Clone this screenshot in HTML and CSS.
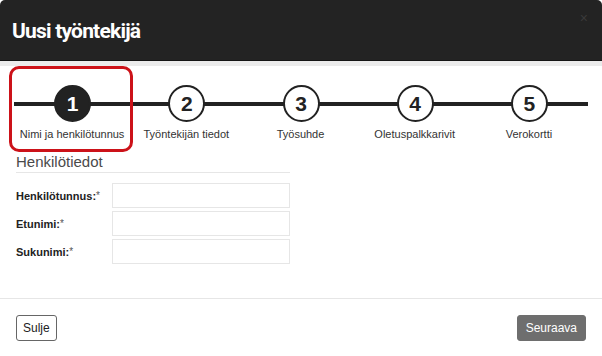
FILE: index.html
```html
<!DOCTYPE html>
<html lang="fi">
<head>
<meta charset="utf-8">
<link rel="stylesheet" href="styles.css">
</head>
<body>
<div class="dialog">
  <div class="header">
    <h1 class="title">Uusi työntekijä</h1>
    <span class="close">×</span>
  </div>
  <div class="band"></div>
  <div class="body">
    <div class="stepper">
      <div class="highlight"></div>
      <div class="step active"><div class="circle">1</div><div class="label">Nimi ja henkilötunnus</div></div>
      <div class="step"><div class="circle">2</div><div class="label">Työntekijän tiedot</div></div>
      <div class="step"><div class="circle">3</div><div class="label">Työsuhde</div></div>
      <div class="step"><div class="circle">4</div><div class="label">Oletuspalkkarivit</div></div>
      <div class="step"><div class="circle">5</div><div class="label">Verokortti</div></div>
    </div>
    <div class="section">
      <div class="section-title">Henkilötiedot</div>
      <div class="row"><label class="field-label">Henkilötunnus:<span class="req">*</span></label><div class="input"></div></div>
      <div class="row"><label class="field-label">Etunimi:<span class="req">*</span></label><div class="input"></div></div>
      <div class="row"><label class="field-label">Sukunimi:<span class="req">*</span></label><div class="input"></div></div>
    </div>
  </div>
  <div class="footer">
    <button class="btn btn-close">Sulje</button>
    <button class="btn btn-next">Seuraava</button>
  </div>
</div>
</body>
</html>
```
FILE: styles.css
```css
html, body { margin: 0; padding: 0; background: #fff; }
.dialog {
  width: 602px; height: 356px; background: #fff;
  font-family: "Liberation Sans", Arial, sans-serif;
  display: flex; flex-direction: column;
  border-radius: 5px 5px 0 0; overflow: hidden;
}
.header {
  height: 60px; background: #232323; border-bottom: 1px solid #151515;
  display: flex; align-items: center; justify-content: space-between;
  padding: 0 14px 0 12px; box-sizing: content-box;
}
.title {
  margin: 0; color: #fff; font-family: Roboto, sans-serif; font-weight: 700;
  font-size: 21px; letter-spacing: -0.8px; padding-top: 2px;
}
.close { color: #3a3a3a; font-size: 14px; align-self: flex-start; margin-top: 10px; }
.band { height: 5px; background: #ebebeb; }
.body { flex: 1; display: flex; flex-direction: column; }
.stepper {
  position: relative; display: flex; padding: 19px 16px 0 15px;
}
.stepper::before {
  content: ""; position: absolute; left: 14px; right: 14px; top: 36px;
  height: 4px; background: #222;
}
.highlight {
  position: absolute; left: 9px; top: 0; width: 118px; height: 80px;
  border: 3px solid #cc1219; border-radius: 10px;
}
.step { flex: 1; display: flex; flex-direction: column; align-items: center; position: relative; }
.circle {
  width: 33px; height: 33px; border: 2px solid #222; border-radius: 50%;
  background: #fff; color: #222; font-weight: bold; font-size: 21px;
  display: flex; align-items: center; justify-content: center; margin-left: 1px;
}
.step.active .circle { background: #222; color: #fff; }
.label { margin-top: 6px; font-size: 11px; color: #333; }
.section { margin: 13px 0 0 16px; width: 274px; }
.section-title {
  font-size: 15px; color: #4a4a4a; padding-bottom: 2px; border-bottom: 1px solid #e6e6e6;
}
.row { display: flex; align-items: center; margin-top: 3px; }
.section-title + .row { margin-top: 10px; }
.field-label { width: 96px; font-size: 11px; font-weight: bold; color: #222; }
.req { font-weight: normal; color: #555; font-size: 10px; vertical-align: 1px; }
.input { width: 176px; height: 23px; border: 1px solid #e6e6e6; }
.footer {
  height: 57px; border-top: 1px solid #e6e6e6;
  display: flex; align-items: center; justify-content: space-between;
  padding: 0 16px; margin-top: auto;
}
.btn {
  font-family: "Liberation Sans", Arial, sans-serif; font-size: 12px;
  height: 26px; border-radius: 3px; padding: 0 8px;
}
.btn-close { background: #fff; border: 1px solid #666; color: #222; padding: 0 6px; }
.btn-next { background: #6e6e6e; border: 1px solid #6e6e6e; color: #fff; }
```
